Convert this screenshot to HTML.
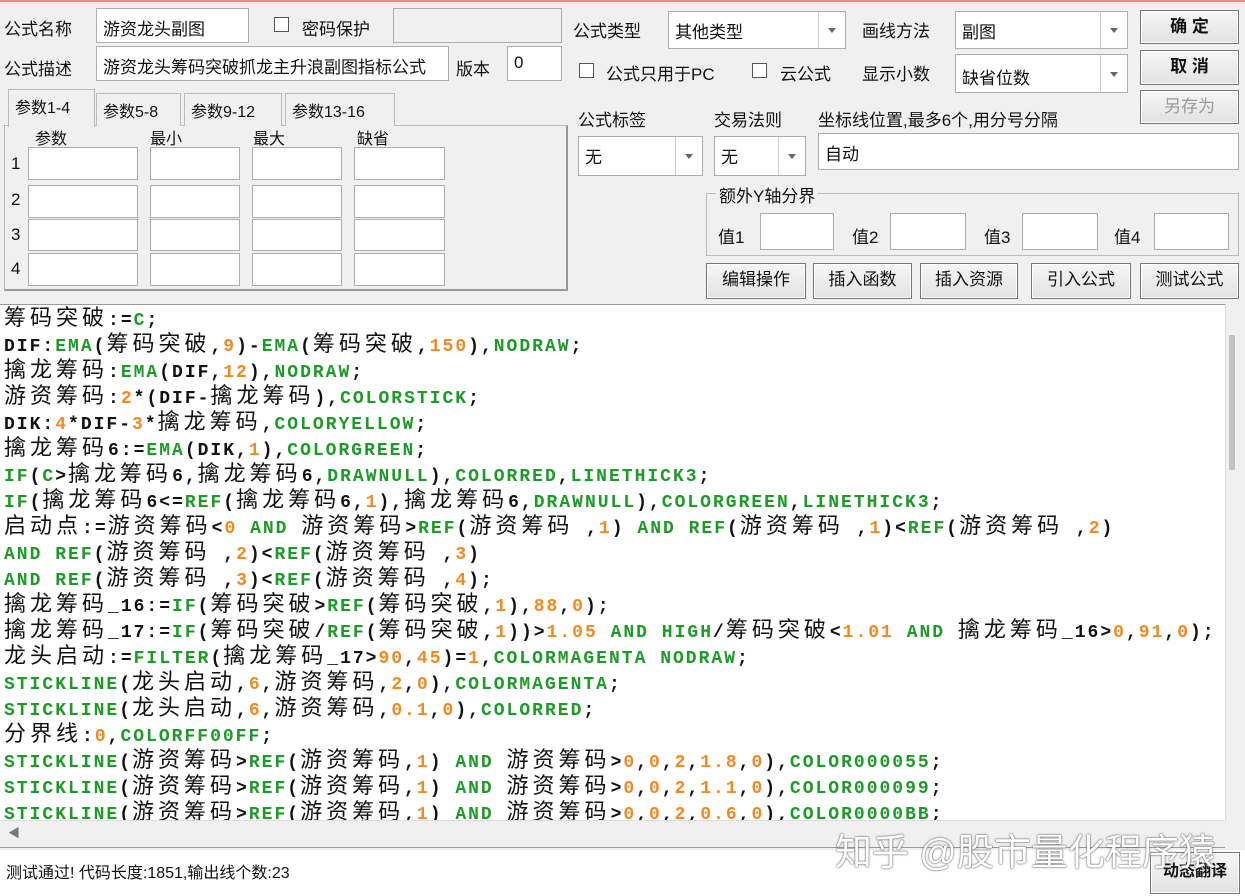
<!DOCTYPE html>
<html><head><meta charset="utf-8"><style>
*{box-sizing:border-box;margin:0;padding:0}
body{width:1245px;height:896px;background:#f0f0f0;position:relative;overflow:hidden;font-family:"Liberation Sans","Noto Sans CJK SC",sans-serif;font-size:17px;color:#111}
.a{position:absolute}
.in{position:absolute;background:#fff;border:1px solid #adadad;padding:3px 6px;font-size:17px;white-space:nowrap;overflow:hidden}
.lb{position:absolute;white-space:nowrap;font-size:17px}
.cb{position:absolute;width:15px;height:15px;border:1px solid #555;background:#fff}
.combo{position:absolute;background:#fff;border:1px solid #adadad;padding:6px 6px;font-size:17px}
.combo .ar{position:absolute;right:0;top:0;bottom:0;width:27px;border-left:1px solid #ccc}
.combo .ar:after{content:"";position:absolute;left:9px;top:50%;margin-top:-2px;border:4px solid transparent;border-top:5px solid #666}
.btn{position:absolute;background:linear-gradient(#f6f6f6,#e2e2e2);border:1px solid #777;box-shadow:inset 0 0 0 1px #fff;text-align:center;font-size:17px;line-height:32px}
.tab{position:absolute;top:93px;height:33px;border:1px solid #bbb;border-bottom:none;background:#f0f0f0;padding:4px 6px;font-size:16px}
#code{position:absolute;left:0;top:304px;width:1225px;height:516px;background:#fff;border-top:1px solid #999;padding:3px 0 0 4px;font-family:"Liberation Mono",monospace;font-weight:bold;font-size:18px;letter-spacing:2px;line-height:26px;white-space:pre;color:#111;overflow:hidden}
#code .c{font-family:"Noto Sans CJK SC",sans-serif;font-weight:normal;font-size:22px;letter-spacing:4px;line-height:10px}
#code .g{color:#1f9a2a}
#code .o{color:#f08a24}
</style></head><body>
<div class="a" style="left:0;top:0;width:1245px;height:2px;background:#e88"></div>
<div class="lb" style="left:4px;top:15px">公式名称</div>
<div class="in" style="left:96px;top:8px;width:153px;height:35px;padding-top:6px">游资龙头副图</div>
<div class="cb" style="left:274px;top:17px"></div>
<div class="lb" style="left:302px;top:15px">密码保护</div>
<div class="in" style="left:393px;top:8px;width:169px;height:35px;background:#f0f0f0"></div>
<div class="lb" style="left:4px;top:55px">公式描述</div>
<div class="in" style="left:96px;top:46px;width:353px;height:35px;padding-top:6px">游资龙头筹码突破抓龙主升浪副图指标公式</div>
<div class="lb" style="left:456px;top:55px">版本</div>
<div class="in" style="left:507px;top:46px;width:55px;height:35px;padding-top:6px">0</div>

<div class="a" style="left:4px;top:125px;width:564px;height:166px;border:1px solid #bbb;border-right:2px solid #999;border-bottom:2px solid #999"></div>
<div class="tab" style="left:8px;top:89px;height:38px;width:87px;background:#f0f0f0;z-index:2">参数1-4</div>
<div class="tab" style="left:96px;width:85px">参数5-8</div>
<div class="tab" style="left:184px;width:98px">参数9-12</div>
<div class="tab" style="left:285px;width:110px">参数13-16</div>
<div class="lb" style="left:35px;top:125px;font-size:16px">参数</div>
<div class="lb" style="left:150px;top:125px;font-size:16px">最小</div>
<div class="lb" style="left:253px;top:125px;font-size:16px">最大</div>
<div class="lb" style="left:357px;top:125px;font-size:16px">缺省</div>
<div class="lb" style="left:11px;top:154px">1</div><div class="lb" style="left:11px;top:190px">2</div><div class="lb" style="left:11px;top:225px">3</div><div class="lb" style="left:11px;top:259px">4</div>
<div class="in" style="left:28px;top:147px;width:110px;height:33px"></div><div class="in" style="left:150px;top:147px;width:90px;height:33px"></div><div class="in" style="left:252px;top:147px;width:90px;height:33px"></div><div class="in" style="left:354px;top:147px;width:91px;height:33px"></div>
<div class="in" style="left:28px;top:185px;width:110px;height:33px"></div><div class="in" style="left:150px;top:185px;width:90px;height:33px"></div><div class="in" style="left:252px;top:185px;width:90px;height:33px"></div><div class="in" style="left:354px;top:185px;width:91px;height:33px"></div>
<div class="in" style="left:28px;top:219px;width:110px;height:32px"></div><div class="in" style="left:150px;top:219px;width:90px;height:32px"></div><div class="in" style="left:252px;top:219px;width:90px;height:32px"></div><div class="in" style="left:354px;top:219px;width:91px;height:32px"></div>
<div class="in" style="left:28px;top:253px;width:110px;height:33px"></div><div class="in" style="left:150px;top:253px;width:90px;height:33px"></div><div class="in" style="left:252px;top:253px;width:90px;height:33px"></div><div class="in" style="left:354px;top:253px;width:91px;height:33px"></div>

<div class="lb" style="left:573px;top:17px">公式类型</div>
<div class="combo" style="left:668px;top:11px;width:178px;height:38px">其他类型<span class="ar"></span></div>
<div class="lb" style="left:862px;top:17px">画线方法</div>
<div class="combo" style="left:955px;top:11px;width:173px;height:38px">副图<span class="ar"></span></div>
<div class="btn" style="left:1140px;top:10px;width:99px;height:34px;font-weight:bold">确 定</div>
<div class="btn" style="left:1140px;top:50px;width:99px;height:35px;font-weight:bold">取 消</div>
<div class="btn" style="left:1140px;top:90px;width:99px;height:34px;color:#999">另存为</div>
<div class="cb" style="left:579px;top:63px"></div>
<div class="lb" style="left:606px;top:60px">公式只用于PC</div>
<div class="cb" style="left:752px;top:63px"></div>
<div class="lb" style="left:780px;top:60px">云公式</div>
<div class="lb" style="left:862px;top:60px">显示小数</div>
<div class="combo" style="left:955px;top:54px;width:173px;height:39px;padding-top:9px">缺省位数<span class="ar"></span></div>
<div class="lb" style="left:578px;top:106px">公式标签</div>
<div class="lb" style="left:714px;top:106px">交易法则</div>
<div class="lb" style="left:818px;top:106px">坐标线位置,最多6个,用分号分隔</div>
<div class="combo" style="left:578px;top:136px;width:125px;height:40px">无<span class="ar"></span></div>
<div class="combo" style="left:714px;top:136px;width:92px;height:40px">无<span class="ar"></span></div>
<div class="in" style="left:818px;top:133px;width:421px;height:37px;padding-top:6px">自动</div>
<div class="a" style="left:706px;top:193px;width:533px;height:63px;border:1px solid #bbb"></div>
<div class="lb" style="left:716px;top:182px;background:#f0f0f0;padding:0 3px">额外Y轴分界</div>
<div class="lb" style="left:718px;top:223px">值1</div><div class="in" style="left:760px;top:213px;width:74px;height:37px"></div>
<div class="lb" style="left:852px;top:223px">值2</div><div class="in" style="left:890px;top:213px;width:76px;height:37px"></div>
<div class="lb" style="left:984px;top:223px">值3</div><div class="in" style="left:1022px;top:213px;width:76px;height:37px"></div>
<div class="lb" style="left:1114px;top:223px">值4</div><div class="in" style="left:1154px;top:213px;width:75px;height:37px"></div>
<div class="btn" style="left:706px;top:263px;width:100px;height:36px">编辑操作</div>
<div class="btn" style="left:813px;top:263px;width:99px;height:36px">插入函数</div>
<div class="btn" style="left:920px;top:263px;width:98px;height:36px">插入资源</div>
<div class="btn" style="left:1031px;top:263px;width:100px;height:36px">引入公式</div>
<div class="btn" style="left:1140px;top:263px;width:99px;height:36px">测试公式</div>

<div id="code"><span class="c">筹码突破</span>:=<span class="g">C</span>;
DIF:<span class="g">EMA</span>(<span class="c">筹码突破</span>,<span class="o">9</span>)-<span class="g">EMA</span>(<span class="c">筹码突破</span>,<span class="o">150</span>),<span class="g">NODRAW</span>;
<span class="c">擒龙筹码</span>:<span class="g">EMA</span>(DIF,<span class="o">12</span>),<span class="g">NODRAW</span>;
<span class="c">游资筹码</span>:<span class="o">2</span>*(DIF-<span class="c">擒龙筹码</span>),<span class="g">COLORSTICK</span>;
DIK:<span class="o">4</span>*DIF-<span class="o">3</span>*<span class="c">擒龙筹码</span>,<span class="g">COLORYELLOW</span>;
<span class="c">擒龙筹码</span>6:=<span class="g">EMA</span>(DIK,<span class="o">1</span>),<span class="g">COLORGREEN</span>;
<span class="g">IF</span>(<span class="g">C</span>&gt;<span class="c">擒龙筹码</span>6,<span class="c">擒龙筹码</span>6,<span class="g">DRAWNULL</span>),<span class="g">COLORRED</span>,<span class="g">LINETHICK3</span>;
<span class="g">IF</span>(<span class="c">擒龙筹码</span>6&lt;=<span class="g">REF</span>(<span class="c">擒龙筹码</span>6,<span class="o">1</span>),<span class="c">擒龙筹码</span>6,<span class="g">DRAWNULL</span>),<span class="g">COLORGREEN</span>,<span class="g">LINETHICK3</span>;
<span class="c">启动点</span>:=<span class="c">游资筹码</span>&lt;<span class="o">0</span> <span class="g">AND</span> <span class="c">游资筹码</span>&gt;<span class="g">REF</span>(<span class="c">游资筹码</span> ,<span class="o">1</span>) <span class="g">AND</span> <span class="g">REF</span>(<span class="c">游资筹码</span> ,<span class="o">1</span>)&lt;<span class="g">REF</span>(<span class="c">游资筹码</span> ,<span class="o">2</span>)
<span class="g">AND</span> <span class="g">REF</span>(<span class="c">游资筹码</span> ,<span class="o">2</span>)&lt;<span class="g">REF</span>(<span class="c">游资筹码</span> ,<span class="o">3</span>)
<span class="g">AND</span> <span class="g">REF</span>(<span class="c">游资筹码</span> ,<span class="o">3</span>)&lt;<span class="g">REF</span>(<span class="c">游资筹码</span> ,<span class="o">4</span>);
<span class="c">擒龙筹码</span>_16:=<span class="g">IF</span>(<span class="c">筹码突破</span>&gt;<span class="g">REF</span>(<span class="c">筹码突破</span>,<span class="o">1</span>),<span class="o">88</span>,<span class="o">0</span>);
<span class="c">擒龙筹码</span>_17:=<span class="g">IF</span>(<span class="c">筹码突破</span>/<span class="g">REF</span>(<span class="c">筹码突破</span>,<span class="o">1</span>))&gt;<span class="o">1.05</span> <span class="g">AND</span> <span class="g">HIGH</span>/<span class="c">筹码突破</span>&lt;<span class="o">1.01</span> <span class="g">AND</span> <span class="c">擒龙筹码</span>_16&gt;<span class="o">0</span>,<span class="o">91</span>,<span class="o">0</span>);
<span class="c">龙头启动</span>:=<span class="g">FILTER</span>(<span class="c">擒龙筹码</span>_17&gt;<span class="o">90</span>,<span class="o">45</span>)=<span class="o">1</span>,<span class="g">COLORMAGENTA</span> <span class="g">NODRAW</span>;
<span class="g">STICKLINE</span>(<span class="c">龙头启动</span>,<span class="o">6</span>,<span class="c">游资筹码</span>,<span class="o">2</span>,<span class="o">0</span>),<span class="g">COLORMAGENTA</span>;
<span class="g">STICKLINE</span>(<span class="c">龙头启动</span>,<span class="o">6</span>,<span class="c">游资筹码</span>,<span class="o">0.1</span>,<span class="o">0</span>),<span class="g">COLORRED</span>;
<span class="c">分界线</span>:<span class="o">0</span>,<span class="g">COLORFF00FF</span>;
<span class="g">STICKLINE</span>(<span class="c">游资筹码</span>&gt;<span class="g">REF</span>(<span class="c">游资筹码</span>,<span class="o">1</span>) <span class="g">AND</span> <span class="c">游资筹码</span>&gt;<span class="o">0</span>,<span class="o">0</span>,<span class="o">2</span>,<span class="o">1.8</span>,<span class="o">0</span>),<span class="g">COLOR000055</span>;
<span class="g">STICKLINE</span>(<span class="c">游资筹码</span>&gt;<span class="g">REF</span>(<span class="c">游资筹码</span>,<span class="o">1</span>) <span class="g">AND</span> <span class="c">游资筹码</span>&gt;<span class="o">0</span>,<span class="o">0</span>,<span class="o">2</span>,<span class="o">1.1</span>,<span class="o">0</span>),<span class="g">COLOR000099</span>;
<span class="g">STICKLINE</span>(<span class="c">游资筹码</span>&gt;<span class="g">REF</span>(<span class="c">游资筹码</span>,<span class="o">1</span>) <span class="g">AND</span> <span class="c">游资筹码</span>&gt;<span class="o">0</span>,<span class="o">0</span>,<span class="o">2</span>,<span class="o">0.6</span>,<span class="o">0</span>),<span class="g">COLOR0000BB</span>;</div>
<div class="a" style="left:1225px;top:304px;width:20px;height:516px;background:#f0f0f0;border-left:1px solid #ddd"></div>
<div class="a" style="left:1229px;top:335px;width:6px;height:135px;background:#c2c2c2"></div>
<div class="a" style="left:0;top:820px;width:1225px;height:28px;background:#f0f0f0;border-top:1px solid #ddd;border-bottom:1px solid #999"></div>
<div class="lb" style="left:8px;top:824px;font-size:12px;color:#777">◀</div>
<div class="a" style="left:0;top:850px;width:1245px;height:46px;background:#fff"></div>
<div class="lb" style="left:6px;top:859px;font-size:16px">测试通过! 代码长度:1851,输出线个数:23</div>
<div class="btn" style="left:1150px;top:852px;width:90px;height:42px;line-height:38px;font-weight:bold;font-size:16px">动态翻译</div>
<div class="lb" style="left:835px;top:822px;font-size:37px;color:#fff;text-shadow:0 0 2px #666,0 0 1px #444">知乎 @股市量化程序猿</div>
</body></html>
